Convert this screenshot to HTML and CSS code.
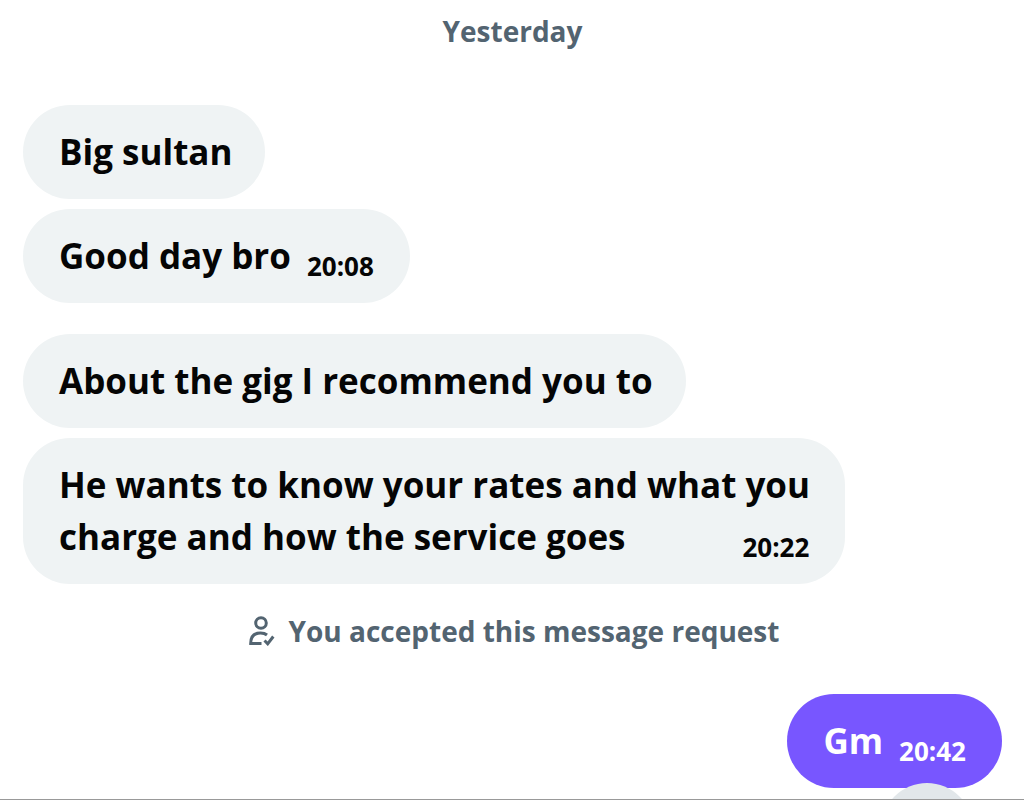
FILE: index.html
```html
<!DOCTYPE html>
<html lang="en">
  <head>
    <meta charset="UTF-8" />
    <meta name="viewport" content="width=device-width, initial-scale=1.0" />
    <title>Messages</title>
    <link rel="stylesheet" href="styles.css">
  </head>
  <body>
    <main class="chat">
      <h2 class="day">Yesterday</h2>
      <div class="group">
        <p class="bubble">Big sultan</p>
        <p class="bubble">Good day bro<time>20:08</time></p>
      </div>
      <div class="group">
        <p class="bubble">About the gig I recommend you to</p>
        <p class="bubble">He wants to know your rates and what you charge and how the service goes<time>20:22</time></p>
      </div>
      <div class="notice">
        <svg class="person" viewBox="0 0 26 30" aria-hidden="true">
          <circle cx="12" cy="7" r="5.3" />
          <path d="M12.500 27.500H1.700C1.700 20.500 5 17 11.500 17c2.700 0 4.800.6 6.500 2" />
          <path d="M15.500 24.500l3.200 3.300 5.600-7.300" />
        </svg>
        <span>You accepted this message request</span>
      </div>
      <div class="group sent">
        <p class="bubble">Gm<time>20:42</time></p>
      </div>
      <button class="scroll-down" aria-label="Scroll to latest"></button>
    </main>
  </body>
</html>
```
FILE: styles.css
```css
* {
    box-sizing: border-box;
}

body {
    margin: 0;
    background: white;
    color: #050505;
    font-family: "Open Sans", sans-serif;
    font-weight: 700;
}

.chat {
    position: relative;
    min-height: 100vh;
    padding: 12px 22px 10px 23px;
    overflow: hidden;
    border-bottom: 1px solid #999;
}

.day {
    margin: 0 0 55px;
    color: #536471;
    font-size: 28px;
    line-height: 38px;
    text-align: center;
}

.group {
    display: flex;
    flex-direction: column;
    align-items: flex-start;
    gap: 10px;
    margin-bottom: 31px;
}

.bubble {
    max-width: 84%;
    margin: 0;
    padding: 21px 33px 21px 36px;
    border-radius: 47px;
    background: #eff3f4;
    font-size: 35px;
    line-height: 52px;
}

/* the time sits at the end of the last line */
.bubble time {
    float: right;
    margin: 20px 3px 0 16px;
    font-size: 26px;
    line-height: 32px;
}

.notice {
    display: flex;
    justify-content: center;
    align-items: center;
    gap: 14px;
    margin-bottom: 47px;
    padding-left: 3px;
    color: #536471;
    font-size: 28px;
    line-height: 32px;
}

.person {
    width: 26px;
    height: 30px;
    fill: none;
    stroke: #536471;
    stroke-width: 3;
}

.sent {
    align-items: flex-end;
    margin-bottom: 0;
}

.sent .bubble {
    background: #7856ff;
    color: white;
}

.scroll-down {
    position: absolute;
    right: 51px;
    bottom: -76px;
    width: 92px;
    height: 92px;
    padding: 0;
    border: none;
    border-radius: 50%;
    background: #e2e7ea;
}
```
